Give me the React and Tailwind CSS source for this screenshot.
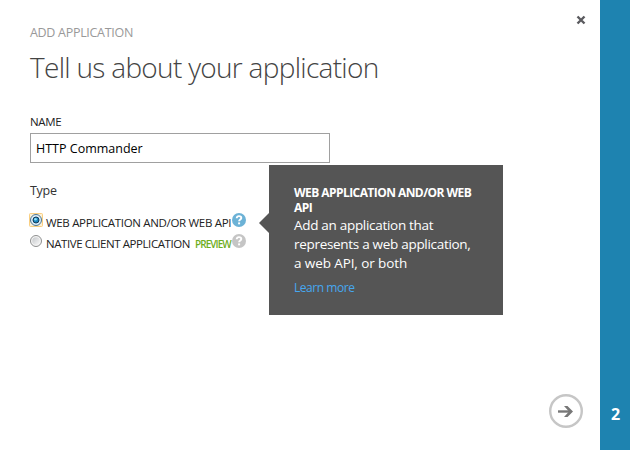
function Help({ className }) {
  return (
    <svg viewBox="0 0 14 14" className={"block size-[14px] shrink-0 " + className}>
      <circle cx="7" cy="7" r="7" fill="currentColor" />
      <path d="M4.700 5.200C4.800 3.700 5.800 3.100 7 3.100c1.400 0 2.300.7 2.300 1.800 0 1.600-2.200 1.600-2.200 3.400" fill="none" stroke="#fff" strokeWidth="1.900" />
      <rect x="6.100" y="9.400" width="2" height="1.900" fill="#fff" />
    </svg>
  );
}

function Radio({ checked }) {
  return (
    <span className={"-ml-px flex size-[14px] shrink-0 items-center justify-center rounded-[2px] " + (checked ? "bg-[#f9cf82]" : "")}>
      <svg viewBox="0 0 12 12" className="block size-[12px]">
        <defs>
          <linearGradient id="shade" x1="0" y1="0" x2="1" y2="1">
            <stop offset="0" stopColor="#c4c7ca" />
            <stop offset="1" stopColor="#f8f8f8" />
          </linearGradient>
        </defs>
        {checked && <rect width="12" height="12" fill="#fdf0d5" />}
        <circle cx="6" cy="6" r="5.500" fill={checked ? "#dceefa" : "#f4f4f4"} stroke={checked ? "#4e7590" : "#8e8f8f"} />
        {checked ? (
          <>
            <circle cx="6" cy="6" r="3" fill="#1b86bd" stroke="#123a58" strokeWidth="1" />
            <circle cx="5.500" cy="5.200" r="1.300" fill="#8fe0fa" />
          </>
        ) : (
          <circle cx="6" cy="6" r="3.800" fill="url(#shade)" />
        )}
      </svg>
    </span>
  );
}

function Tooltip() {
  return (
    <aside className="absolute left-[269px] top-[165px] h-[150px] w-[234px] bg-[#555555] pl-[25px] pt-[20px] text-white">
      <svg viewBox="0 0 10 20" className="absolute -left-[10px] top-[48px] h-[20px] w-[10px]">
        <path d="M10 0v20L0 10z" fill="#555555" />
      </svg>
      <h2 className="whitespace-nowrap text-[12px] font-bold leading-[15px] tracking-[-0.560px]">
        WEB APPLICATION AND/OR WEB
        <br />
        API
      </h2>
      <p className="mt-px whitespace-nowrap text-[13.500px] leading-[19px] tracking-[-0.300px]">
        Add an application that
        <br />
        represents a web application,
        <br />
        <span className="tracking-[-0.100px]">a web API, or both</span>
      </p>
      <a className="mt-[7px] block text-[12px] leading-[16px] tracking-[-0.450px] text-[#46a8f0]">Learn more</a>
    </aside>
  );
}

export default function App() {
  return (
    <div className="relative flex h-[450px] w-[630px] overflow-hidden bg-white font-['Open_Sans','Noto_Sans',sans-serif] text-[#333333]">
      <main className="flex flex-1 flex-col pl-[30px] whitespace-nowrap">
        <div className="mt-[24px] h-[18px] text-[12.500px] leading-[18px] tracking-[-0.300px] text-[#999999]">ADD APPLICATION</div>
        <h1 className="mt-[5px] h-[40px] text-[28px] font-light leading-[40px] tracking-[-0.700px] text-[#444444]">Tell us about your application</h1>
        <label className="mt-[27px] h-[16px] text-[11.500px] leading-[16px] tracking-[-0.300px] text-[#222222]">NAME</label>
        <div className="mt-[3px] h-[30px] w-[300px] border border-[#a0a0a0] pl-[5px] text-[12.500px] leading-[29px] text-black">HTTP Commander</div>
        <div className="mt-[19px] h-[18px] text-[12.500px] leading-[18px] tracking-[-0.300px]">Type</div>
        <div className="mt-[13px] flex h-[17px] text-[11.500px] leading-[20px] text-[#222222]">
          <Radio checked />
          <span className="ml-[3px] w-[186px] tracking-[-0.320px]">WEB APPLICATION AND/OR WEB API</span>
          <Help className="text-[#6cb2d6]" />
        </div>
        <div className="mt-[4px] flex h-[17px] text-[11.500px] leading-[20px] text-[#222222]">
          <Radio />
          <span className="ml-[3px] w-[149px] tracking-[-0.420px]">NATIVE CLIENT APPLICATION</span>
          <span className="w-[37px] text-[10px] font-semibold leading-[21px] tracking-[-0.950px] text-[#6fae1e]">PREVIEW</span>
          <Help className="text-[#c5c5c5]" />
        </div>
      </main>
      <div className="flex w-[54px] flex-col justify-between pb-[22px] pt-[15px]">
        <svg viewBox="0 0 10 10" className="ml-[30px] block size-[10px]">
          <path d="M1.500 1.500l7 7M8.500 1.500l-7 7" stroke="#5b5b5f" strokeWidth="2.400" />
        </svg>
        <svg viewBox="0 0 34 34" className="ml-[3px] block size-[34px]">
          <circle cx="17" cy="17" r="15.800" fill="none" stroke="#c6c6c6" strokeWidth="2.400" />
          <path d="M9 17.500h12" stroke="#777" strokeWidth="2.400" />
          <path d="M15 12h3.500l5.500 5.500-5.500 5.500H15l5-5.500z" fill="#777" />
        </svg>
      </div>
      <nav className="flex w-[30px] items-end justify-center bg-[#1e83b0] pb-[25px] pl-px text-[16px] font-bold leading-[22px] text-white">2</nav>
      <Tooltip />
    </div>
  );
}
